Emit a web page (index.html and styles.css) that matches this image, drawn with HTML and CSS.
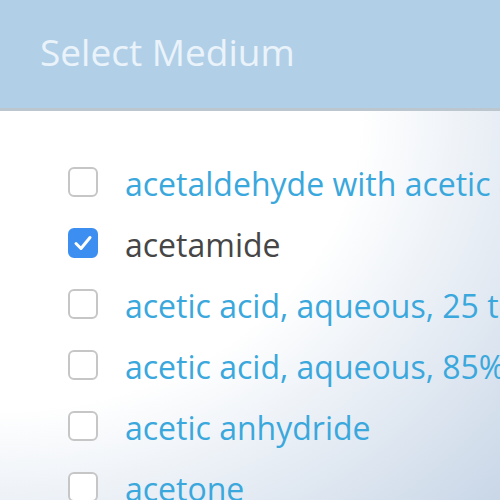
FILE: index.html
```html
<!DOCTYPE html>
<html>
<head>
<meta charset="utf-8">
<link rel="stylesheet" href="styles.css">
</head>
<body>
<div class="page">
  <header class="header">
    <h1 class="title">Select Medium</h1>
  </header>
  <main class="content">
    <ul class="list">
      <li class="item"><span class="box"></span><span class="label">acetaldehyde with acetic acid</span></li>
      <li class="item checked"><span class="box"><svg viewBox="0 0 30 30" width="30" height="30"><path d="M8 15.5 L13 20.5 L22 9.5" fill="none" stroke="#fff" stroke-width="3" stroke-linecap="round" stroke-linejoin="round"/></svg></span><span class="label">acetamide</span></li>
      <li class="item"><span class="box"></span><span class="label">acetic acid, aqueous, 25 to 60%</span></li>
      <li class="item"><span class="box"></span><span class="label">acetic acid, aqueous, 85%</span></li>
      <li class="item"><span class="box"></span><span class="label">acetic anhydride</span></li>
      <li class="item"><span class="box"></span><span class="label">acetone</span></li>
    </ul>
  </main>
</div>
</body>
</html>
```

FILE: styles.css
```css
html, body {
  margin: 0;
  padding: 0;
}
body {
  width: 500px;
  height: 500px;
  overflow: hidden;
  font-family: "Open Sans", "Noto Sans", sans-serif;
}
.page {
  display: flex;
  flex-direction: column;
  height: 500px;
  overflow: hidden;
}
.header {
  height: 111px;
  background: #b1d0e8;
  border-bottom: 3px solid #bcc6ce;
  padding: 26px 0 0 40px;
  box-sizing: border-box;
  flex-shrink: 0;
}
.title {
  margin: 0;
  font-size: 37px;
  line-height: normal;
  font-weight: 400;
  color: #ebf3fa;
}
.content {
  flex: 1;
  overflow: hidden;
  background: radial-gradient(ellipse 150% 160% at 0% 0%, #ffffff 48%, #c4d3e5 95%);
}
.list {
  list-style: none;
  margin: 0;
  padding: 56px 0 0 68px;
  display: flex;
  flex-direction: column;
  gap: 31px;
}
.item {
  display: flex;
  align-items: flex-start;
  gap: 27px;
  height: 30px;
  white-space: nowrap;
}
.box {
  width: 30px;
  height: 30px;
  box-sizing: border-box;
  border: 2px solid #c6c6c6;
  border-radius: 6px;
  background: #fff;
  flex-shrink: 0;
  display: flex;
}
.checked .box {
  background: #3c8ff0;
  border-color: #3c8ff0;
}
.checked .box svg {
  margin: -2px;
}
.label {
  font-size: 32px;
  color: #3aa8dc;
  line-height: 30px;
  padding-top: 2px;
}
.checked .label {
  color: #464646;
}
```
